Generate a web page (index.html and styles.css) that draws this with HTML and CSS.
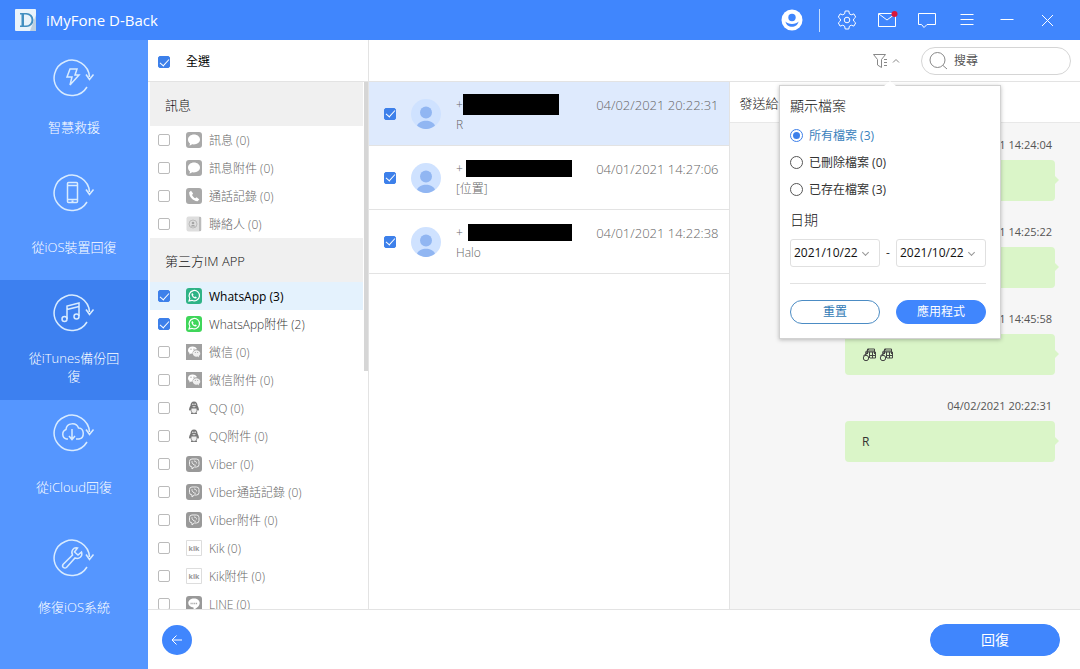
FILE: index.html
```html
<!DOCTYPE html>
<html lang="zh-Hant">
<head>
<meta charset="utf-8">
<meta name="viewport" content="width=device-width, initial-scale=1">
<title>iMyFone D-Back</title>
<link rel="stylesheet" href="styles.css">
</head>
<body>
<svg class="sprite" aria-hidden="true">
  <symbol id="i-ring" viewBox="0 0 44 44"><path d="M37.500 20A17.700 17.700 0 1 0 35 30M34 17.500l3.500 5 4-5" /></symbol>
  <symbol id="i-message" viewBox="0 0 16 16"><rect width="16" height="16" rx="3" fill="#a9a9a9"/><path d="M8 2.500C4.700 2.500 2 4.700 2 7.500c0 1.600.8 3 2 3.900L3.500 13.700l2.700-1.400C10.500 13 14 10.700 14 7.500 14 4.700 11.300 2.500 8 2.500z" fill="#fff"/></symbol>
  <symbol id="i-phone" viewBox="0 0 16 16"><rect width="16" height="16" rx="3" fill="#a9a9a9"/><path d="M5 2.800L3.200 4.300c-.4 4.300 4 9 8.300 8.900l1.800-1.800-2.600-2.200-1.500 1.100C7.800 9.600 6.600 8.300 6.100 7l1-1.500z" fill="#fff"/></symbol>
  <symbol id="i-contact" viewBox="0 0 16 16"><rect x=".5" y=".5" width="15" height="15" rx="2" fill="#dedede"/><path d="M13 1h2v14h-2z" fill="#bcbcbc"/><circle cx="7" cy="8" r="4" fill="none" stroke="#bbb"/><circle cx="7" cy="7" r="1.300" fill="#a5a5a5"/><path d="M4.500 10.500c1-2 4-2 5 0z" fill="#a5a5a5"/></symbol>
  <symbol id="i-whatsapp" viewBox="0 0 16 16"><rect width="16" height="16" rx="3" fill="currentColor"/><path d="M3 13l.8-2.700A5.200 5.200 0 1 1 5.900 12.300z" fill="none" stroke="#fff" stroke-width="1.200"/><path d="M6.300 5l-.9.900c.1 2.500 2.300 4.600 4.600 4.500l.9-1-1.500-1-.8.600c-.8-.3-1.300-.9-1.600-1.600l.5-.8z" fill="#fff"/></symbol>
  <symbol id="i-wechat" viewBox="0 0 16 16"><path d="M0 0h16v16H0z" fill="#a0a0a0"/><path d="M6.500 2.500C3.900 2.500 2 4 2 6.200c0 1.200.6 2.200 1.600 2.900L3.200 10.500 5 9.600l1.600.2C6.300 7 8.500 5.300 11 5.300 10.600 3.600 8.800 2.500 6.500 2.500z" fill="#fff"/><path d="M14.300 9.500c0-1.900-1.700-3.300-3.900-3.300S6.800 7.600 6.800 9.500s1.600 3.300 3.600 3.300l1.300-.2 1.500.9-.4-1.500c.9-.6 1.500-1.500 1.500-2.500z" fill="#eee"/><g fill="#999"><circle cx="5" cy="5.200" r=".6"/><circle cx="8" cy="5.200" r=".6"/><circle cx="9.300" cy="8.600" r=".5"/><circle cx="11.700" cy="8.600" r=".5"/></g></symbol>
  <symbol id="i-qq" viewBox="0 0 16 16"><path d="M8 1.500C5.600 1.500 4.500 3.300 4.500 5.500 3.600 7 2.800 9 3.100 10.800l1.200-1c.1 1.100.6 2 1.200 2.600-1.500 1.500 0 2.100 2.500 1.300 2.500.8 4 .2 2.500-1.300.6-.6 1.100-1.500 1.200-2.600l1.200 1C13.200 9 12.400 7 11.500 5.500 11.500 3.300 10.400 1.500 8 1.500z" fill="#777"/><path d="M5.500 8.400h5c.7 3-.7 4.600-2.500 4.600s-3.200-1.600-2.500-4.600zM6 6.200h4L8 7.500z" fill="#eee"/><circle cx="6.900" cy="4.200" r=".7" fill="#fff"/><circle cx="9.100" cy="4.200" r=".7" fill="#fff"/></symbol>
  <symbol id="i-viber" viewBox="0 0 16 16"><rect width="16" height="16" rx="3" fill="#999"/><path d="M6 3h4.500Q13 3 13 5.500v3Q13 11 10.500 11H8.300L6 13v-2.100Q3.500 10.800 3.500 8.500v-3Q3.500 3 6 3z" fill="none" stroke="#eee"/><path d="M6 5.200c-.4 1.800 1.600 4.200 3.800 4.100M8 5c1.700 0 2.500.9 2.500 2.400" fill="none" stroke="#eee"/></symbol>
  <symbol id="i-kik" viewBox="0 0 16 16"><path d="M.5.5h15v15H.5z" fill="#fff" stroke="#ddd"/><text x="8" y="10.500" text-anchor="middle" class="kik-mark">kik</text></symbol>
  <symbol id="i-line" viewBox="0 0 16 16"><rect width="16" height="16" rx="3" fill="#999"/><path d="M8 2.500C4.800 2.500 2.300 4.500 2.300 7S4.500 11.200 7.500 11.500l.2 2.200c3-1.400 6-3.800 6-6.700 0-2.500-2.500-4.500-5.700-4.500z" fill="#fff"/><path d="M4.500 7.500h7" stroke="#aaa" stroke-width="1.500" stroke-dasharray="1.200 .6"/></symbol>
  <symbol id="i-avatar" viewBox="0 0 30 30"><circle cx="15" cy="15" r="15" fill="#cfe2ff"/><circle cx="15" cy="13.500" r="6" fill="#91b6f2"/><path d="M6 26.500C8.500 20 21.500 20 24 26.500 18.500 31.200 11.500 31.200 6 26.500z" fill="#91b6f2"/></symbol>
  <symbol id="i-emoji" viewBox="0 0 15 15"><path d="M5.500 7V2h7v5M3 5.500L7 2M4 8V5h9.500v6H8M7.500 5v6M10.500 5v6M5 4h7M8 8.500h5M1.500 9l3-3M3 8l3-3"/><circle cx="4" cy="11" r="2.700"/></symbol>
</svg>
<div class="app">
  <header class="titlebar">
    <svg class="logo" viewBox="0 0 22 22" aria-hidden="true"><rect width="21" height="22" rx="1" fill="#e9f3fb"/><path d="M15 22l6-16v16z" fill="#bccfe1"/><path d="M5 4h6.500a7 7 0 0 1 0 14H5v-1.500h1.500v-11H5z" fill="#438fc0"/><path d="M9 5.500h2a5.500 5.500 0 0 1 0 11H9z" fill="#e9f3fb"/></svg>
    <h1 class="app-name">iMyFone D-Back</h1>
    <div class="window-tools">
      <button class="tool" aria-label="帳戶"><svg viewBox="0 0 22 22"><circle cx="11" cy="11" r="10.500" fill="#fff"/><circle cx="11" cy="8.500" r="3.700" fill="#4086fd"/><path d="M4.500 12.500c1 7 12 7 13 0-2 3.300-11 3.300-13 0z" fill="#4086fd"/></svg></button>
      <span class="tool-divider"></span>
      <button class="tool" aria-label="設定"><svg class="line" viewBox="0 0 22 22"><path d="M9.200 2h3.600l.6 2.800 1.800 1 2.700-.9 1.800 3.200-2.100 1.900v2l2.100 1.900-1.800 3.200-2.700-.9-1.800 1-.6 2.800H9.200l-.6-2.800-1.800-1-2.700.9-1.800-3.200L4.400 12v-2L2.300 8.100l1.800-3.200 2.700.9 1.800-1z"/><circle cx="11" cy="11" r="2.800"/></svg></button>
      <button class="tool" aria-label="郵件"><svg class="line" viewBox="0 0 22 22"><path d="M2.500 4.500h17v13h-17zM3 5l8 6 8-6"/><circle cx="18.500" cy="5" r="3" fill="#d9173a" stroke="none"/></svg></button>
      <button class="tool" aria-label="意見"><svg class="line" viewBox="0 0 22 22"><path d="M2.500 4.500h17v11H11l-3 3-2.500-3h-3z"/></svg></button>
      <button class="tool" aria-label="選單"><svg class="line" viewBox="0 0 22 22"><path d="M4.500 5.500h13M4.500 10.500h13M4.500 15.500h13"/></svg></button>
      <button class="tool" aria-label="最小化"><svg class="line" viewBox="0 0 22 22"><path d="M4.500 10.500h13"/></svg></button>
      <button class="tool" aria-label="關閉"><svg class="line" viewBox="0 0 22 22"><path d="M6 6l11 11M17 6L6 17"/></svg></button>
    </div>
  </header>

  <nav class="sidebar">
    <a class="mode" href="#"><svg class="mode-icon" viewBox="0 0 44 50"><use href="#i-ring" y="5" width="44" height="44"/><path d="M18 17h7l-2 6h4l-9 10 2-8h-5z"/></svg><span class="mode-name">智慧救援</span></a>
    <a class="mode" href="#"><svg class="mode-icon" viewBox="0 0 44 50"><use href="#i-ring" width="44" height="44"/><rect x="15.500" y="10.500" width="10" height="20" rx="1"/><path d="M15.500 13.500h10M15.500 27.500h10M19.500 29.200h2"/></svg><span class="mode-name">從iOS裝置回復</span></a>
    <a class="mode mode-active" href="#" aria-current="page"><svg class="mode-icon" viewBox="0 0 44 50"><use href="#i-ring" width="44" height="44"/><path d="M15 27V14l12-3v13M15 17.500l12-3"/><circle cx="12.500" cy="27" r="2.500"/><circle cx="24.500" cy="24.500" r="2.500"/></svg><span class="mode-name">從iTunes備份回復</span></a>
    <a class="mode" href="#"><svg class="mode-icon" viewBox="0 0 44 50"><use href="#i-ring" width="44" height="44"/><path d="M16 27h-1.500a5 5 0 0 1-.5-9.500c.5-7 10.500-7.500 12.500-1.500 6-.5 6.500 10 .5 11h-3M20 17v10M17 24l3 3.500 3-3.500"/></svg><span class="mode-name">從iCloud回復</span></a>
    <a class="mode" href="#"><svg class="mode-icon" viewBox="0 0 44 50"><use href="#i-ring" y="5" width="44" height="44"/><path d="M25.500 16c-4-1-7 3-5 7L11 32.500c-1.500 2.500 1.500 4.500 3.500 3L23 26c4 1.500 8-1.500 6.500-6L26 23l-3.500-3z"/></svg><span class="mode-name">修復iOS系統</span></a>
  </nav>

  <main class="workspace">
    <div class="toolbar">
      <label class="select-all"><input class="check" type="checkbox" checked><span>全選</span></label>
      <div class="toolbar-right">
        <button class="filter" aria-label="篩選" aria-expanded="true"><svg viewBox="0 0 28 16"><path d="M1.500 1.500h12l-4 5v8l-4-2.500V6.500zM12 6.500h3M12 9.500h3M12 12.500h3M21 9.500l3-3 3 3"/></svg></button>
        <label class="search"><svg viewBox="0 0 20 20" aria-hidden="true"><circle cx="8.500" cy="9" r="7.500"/><path d="M14 14.500l4 3.500"/></svg><input type="search" placeholder="搜尋" aria-label="搜尋"></label>
        <form class="filter-panel">
          <fieldset class="file-group">
            <legend>顯示檔案</legend>
            <label class="option option-on"><input type="radio" name="files" checked><span>所有檔案 (3)</span></label>
            <label class="option"><input type="radio" name="files"><span>已刪除檔案 (0)</span></label>
            <label class="option"><input type="radio" name="files"><span>已存在檔案 (3)</span></label>
          </fieldset>
          <h2 class="date-title">日期</h2>
          <div class="date-range">
            <span class="date"><select aria-label="開始日期"><option>2021/10/22</option></select></span>
            <span class="dash">-</span>
            <span class="date"><select aria-label="結束日期"><option>2021/10/22</option></select></span>
          </div>
          <div class="panel-actions">
            <button class="pill pill-outline" type="reset">重置</button>
            <button class="pill" type="button">應用程式</button>
          </div>
        </form>
      </div>
    </div>

    <div class="panes">
      <section class="categories">
        <h2 class="group-name">訊息</h2>
        <label class="category"><input class="check" type="checkbox"><svg><use href="#i-message"/></svg><span>訊息 (0)</span></label>
        <label class="category"><input class="check" type="checkbox"><svg><use href="#i-message"/></svg><span>訊息附件 (0)</span></label>
        <label class="category"><input class="check" type="checkbox"><svg><use href="#i-phone"/></svg><span>通話記錄 (0)</span></label>
        <label class="category"><input class="check" type="checkbox"><svg><use href="#i-contact"/></svg><span>聯絡人 (0)</span></label>
        <h2 class="group-name">第三方IM APP</h2>
        <label class="category category-active"><input class="check" type="checkbox" checked><svg class="wa-teal"><use href="#i-whatsapp"/></svg><span>WhatsApp (3)</span></label>
        <label class="category category-filled"><input class="check" type="checkbox" checked><svg class="wa-green"><use href="#i-whatsapp"/></svg><span>WhatsApp附件 (2)</span></label>
        <label class="category"><input class="check" type="checkbox"><svg><use href="#i-wechat"/></svg><span>微信 (0)</span></label>
        <label class="category"><input class="check" type="checkbox"><svg><use href="#i-wechat"/></svg><span>微信附件 (0)</span></label>
        <label class="category"><input class="check" type="checkbox"><svg><use href="#i-qq"/></svg><span>QQ (0)</span></label>
        <label class="category"><input class="check" type="checkbox"><svg><use href="#i-qq"/></svg><span>QQ附件 (0)</span></label>
        <label class="category"><input class="check" type="checkbox"><svg><use href="#i-viber"/></svg><span>Viber (0)</span></label>
        <label class="category"><input class="check" type="checkbox"><svg><use href="#i-viber"/></svg><span>Viber通話記錄 (0)</span></label>
        <label class="category"><input class="check" type="checkbox"><svg><use href="#i-viber"/></svg><span>Viber附件 (0)</span></label>
        <label class="category"><input class="check" type="checkbox"><svg><use href="#i-kik"/></svg><span>Kik (0)</span></label>
        <label class="category"><input class="check" type="checkbox"><svg><use href="#i-kik"/></svg><span>Kik附件 (0)</span></label>
        <label class="category"><input class="check" type="checkbox"><svg><use href="#i-line"/></svg><span>LINE (0)</span></label>
        <span class="scroll-thumb"></span>
      </section>

      <section class="chats">
        <article class="chat chat-active">
          <input class="check" type="checkbox" checked aria-label="對話 1"><svg class="avatar"><use href="#i-avatar"/></svg>
          <div class="chat-text"><p class="number">+<span class="redacted redacted-a"></span></p><p>R</p></div>
          <time>04/02/2021 20:22:31</time>
        </article>
        <article class="chat">
          <input class="check" type="checkbox" checked aria-label="對話 2"><svg class="avatar"><use href="#i-avatar"/></svg>
          <div class="chat-text"><p class="number">+<span class="redacted redacted-b"></span></p><p>[位置]</p></div>
          <time>04/01/2021 14:27:06</time>
        </article>
        <article class="chat">
          <input class="check" type="checkbox" checked aria-label="對話 3"><svg class="avatar"><use href="#i-avatar"/></svg>
          <div class="chat-text"><p class="number">+<span class="redacted redacted-c"></span></p><p>Halo</p></div>
          <time>04/01/2021 14:22:38</time>
        </article>
      </section>

      <section class="thread">
        <h2 class="recipient">發送給</h2>
        <div class="messages">
          <article class="message"><time>04/01/2021 14:24:04</time><p class="bubble"></p></article>
          <article class="message"><time>04/01/2021 14:25:22</time><p class="bubble"></p></article>
          <article class="message"><time>04/01/2021 14:45:58</time><p class="bubble"><svg class="emoji"><use href="#i-emoji"/></svg><svg class="emoji"><use href="#i-emoji"/></svg></p></article>
          <article class="message"><time>04/02/2021 20:22:31</time><p class="bubble">R</p></article>
        </div>
      </section>
    </div>

    <footer class="actions">
      <button class="back" aria-label="返回"><svg viewBox="0 0 12 12"><path d="M11 6H1.500M5.500 1.500L1 6l4.500 4.500"/></svg></button>
      <button class="pill recover">回復</button>
    </footer>
  </main>
</div>
</body>
</html>
```
FILE: styles.css
```css
* { box-sizing: border-box; }
body, h1, h2, p, fieldset { margin: 0; }
body {
  font: 12px/18px "Open Sans", "Noto Sans CJK TC", sans-serif;
  color: #333;
}
button, input, select { font: inherit; margin: 0; }
button { border: 0; background: none; padding: 0; color: inherit; }
svg { display: block; flex: none; }
.sprite { position: absolute; width: 0; height: 0; }

.app {
  display: grid;
  grid-template: 40px minmax(0, 1fr) / 148px minmax(0, 1fr);
  height: 100vh;
  background: #fff;
}

.titlebar {
  grid-column: 1 / -1;
  display: flex;
  align-items: center;
  padding: 0 22px 0 15px;
  background: #4086fd;
  color: #fff;
}
.logo { width: 22px; height: 22px; }
.app-name { margin-left: 9px; font-size: 15px; font-weight: 400; line-height: 24px; }
.window-tools { display: flex; align-items: center; gap: 18px; margin-left: auto; }
.tool svg { width: 22px; height: 22px; }
.line { fill: none; stroke: #fff; stroke-width: 1; }
.tool-divider { width: 1px; height: 23px; margin: 0 -2px; background: #c2dcff; }

.sidebar { background: #5596ff; }
.mode {
  display: flex;
  flex-direction: column;
  align-items: center;
  height: 120px;
  padding-top: 12px;
  color: #fff;
  text-decoration: none;
  text-align: center;
}
.mode-active { background: #3d80f0; }
.mode-icon { width: 44px; height: 50px; fill: none; stroke: #d8ebff; stroke-width: 1.500; }
.mode-name {
  display: flex;
  align-items: center;
  justify-content: center;
  width: 96px;
  height: 50px;
  font-size: 13px;
  font-weight: 300;
}

.workspace { display: flex; flex-direction: column; min-width: 0; }
.toolbar { display: flex; height: 42px; border-bottom: 1px solid #e3e3e3; }
.select-all {
  display: flex;
  align-items: center;
  gap: 16px;
  width: 221px;
  padding: 3px 0 0 10px;
  border-right: 1px solid #e3e3e3;
  color: #000;
}
.check {
  appearance: none;
  flex: none;
  display: grid;
  place-items: center;
  width: 12px;
  height: 12px;
  border: 1px solid #bbb;
  border-radius: 2px;
  background: #fff;
}
.check:checked { border-color: #3d80ea; background: #3d80ea; }
.check:checked::after {
  content: "";
  width: 4px;
  height: 8px;
  border: solid #fff;
  border-width: 0 1px 1px 0;
  transform: translateY(-1px) rotate(42deg);
}
.toolbar-right {
  position: relative;
  flex: 1;
  display: flex;
  align-items: center;
  justify-content: flex-end;
  gap: 21px;
  padding: 1px 9px 0 0;
}
.filter svg { width: 28px; height: 16px; fill: none; stroke: #888; }
.search {
  display: flex;
  align-items: center;
  gap: 5px;
  width: 150px;
  height: 28px;
  padding: 0 7px;
  border: 1px solid #d5d5d5;
  border-radius: 14px;
}
.search svg { width: 20px; height: 20px; fill: none; stroke: #888; }
.search input { width: 100%; min-width: 0; border: 0; padding: 0; outline: 0; background: none; }
.search input::placeholder { color: #555; opacity: 1; }

.filter-panel {
  position: absolute;
  z-index: 2;
  top: 45px;
  right: 79px;
  width: 222px;
  padding: 9px 14px 14px 10px;
  border: 1px solid #d2d2d2;
  background: #fff;
  box-shadow: 0 1px 4px rgba(0, 0, 0, .25);
}
.filter-panel::before {
  content: "";
  position: absolute;
  top: -5px;
  left: 104px;
  border: solid transparent;
  border-width: 0 6px 5px;
  border-bottom-color: #fff;
}
.file-group { display: grid; min-width: 0; border: 0; padding: 0; }
.file-group legend, .date-title { padding: 0; font-size: 14px; font-weight: 300; line-height: 22px; color: #111; }
.option { display: flex; align-items: center; gap: 6px; height: 27px; }
.file-group legend { margin-bottom: 5px; }
.option input {
  appearance: none;
  width: 13px;
  height: 13px;
  padding: 2px;
  border: 1px solid #555;
  border-radius: 50%;
}
.option input:checked { border-color: #3d80ea; background: #3d80ea content-box; }
.option-on { color: #3b82bd; }
.date-title { margin: 6px 0 8px; }
.date-range { display: flex; align-items: center; justify-content: space-between; }
.date { position: relative; width: 90px; }
.date select {
  appearance: none;
  display: block;
  width: 100%;
  height: 28px;
  padding: 0 3px;
  border: 1px solid #e0e0e0;
  border-radius: 3px;
  background: #fff;
  color: #111;
}
.date::after {
  content: "";
  position: absolute;
  right: 12px;
  top: 11px;
  width: 4px;
  height: 4px;
  border: solid #999;
  border-width: 0 1px 1px 0;
  transform: rotate(45deg);
}
.panel-actions {
  display: flex;
  justify-content: space-between;
  margin-top: 16px;
  padding-top: 16px;
  border-top: 1px solid #e2e2e2;
}
.pill {
  width: 90px;
  height: 24px;
  border: 1px solid #4086fd;
  border-radius: 24px;
  background: #4086fd;
  color: #fff;
}
.pill-outline { border-color: #4c8cc4; background: #fff; color: #2f79b5; }

.panes { flex: 1; display: flex; min-height: 0; }
.categories {
  position: relative;
  flex: none;
  width: 221px;
  padding: 0 5px 0 2px;
  overflow: hidden;
  border-right: 1px solid #e3e3e3;
}
.group-name {
  display: flex;
  align-items: center;
  height: 44px;
  padding: 2px 0 0 15px;
  background: #f0f0f0;
  font-size: 13px;
  font-weight: 300;
  color: #111;
}
.category { display: flex; align-items: center; height: 28px; padding-left: 8px; color: #666; font-weight: 300; }
.category span { padding-top: 2px; }
.category svg { width: 16px; height: 16px; margin: 0 7px 0 16px; }
.category-active { background: #e4f2fd; color: #000; font-weight: 400; }
.category-filled { color: #333; }
.category .wa-teal { color: #2eb386; }
.category .wa-green { color: #3fd65a; }
.kik-mark { font-size: 7px; font-weight: 700; fill: #999; }
.scroll-thumb { position: absolute; top: 0; right: 0; width: 4px; height: 289px; background: #d6d6d6; }

.chats { flex: 360; min-width: 0; border-right: 1px solid #e3e3e3; }
.chat {
  display: flex;
  align-items: center;
  height: 64px;
  padding: 0 10px 0 15px;
  border-bottom: 1px solid #e3e3e3;
  color: #666;
  font-weight: 300;
}
.chat-active { background: #deeafd; }
.avatar { width: 30px; height: 30px; margin: 0 15px; }
.chat-text { flex: 1; min-width: 0; padding-top: 2px; line-height: 20px; }
.number { display: flex; align-items: center; height: 20px; }
.redacted { height: 17px; background: #000; }
.redacted-a { width: 96px; height: 21px; }
.redacted-b { width: 106px; margin-left: 3px; }
.redacted-c { width: 104px; margin-left: 5px; }
.chat time { align-self: flex-start; padding-top: 14px; font-size: 13px; }

.thread { flex: 351; min-width: 0; background: #f6f6f6; }
.recipient {
  height: 41px;
  padding: 0 10px;
  border-bottom: 1px solid #e8e8e8;
  background: #fff;
  font-size: 13px;
  font-weight: 300;
  line-height: 42px;
  color: #111;
}
.messages { display: flex; flex-direction: column; padding: 13px 25px 0 10px; gap: 22px; }
.message { display: flex; flex-direction: column; align-items: flex-end; gap: 6px; }
.message time { padding-right: 3px; font-size: 11px; color: #555; }
.bubble {
  position: relative;
  display: flex;
  align-items: center;
  gap: 2px;
  width: 210px;
  max-width: 100%;
  height: 41px;
  padding-left: 17px;
  border-radius: 4px;
  background: #daf5c8;
}
.bubble::after {
  content: "";
  position: absolute;
  left: 100%;
  top: 16px;
  border: solid transparent;
  border-width: 4px 0 4px 4px;
  border-left-color: #daf5c8;
}
.emoji { width: 15px; height: 15px; fill: none; stroke: #444; stroke-width: 1; }

.actions {
  display: flex;
  align-items: center;
  justify-content: space-between;
  height: 60px;
  padding: 0 20px 0 14px;
  border-top: 1px solid #e3e3e3;
}
.back { display: grid; place-items: center; width: 30px; height: 30px; border-radius: 50%; background: #4086fd; }
.back svg { width: 12px; height: 12px; fill: none; stroke: #fff; }
.recover { width: 130px; height: 32px; font-size: 14px; }
```
